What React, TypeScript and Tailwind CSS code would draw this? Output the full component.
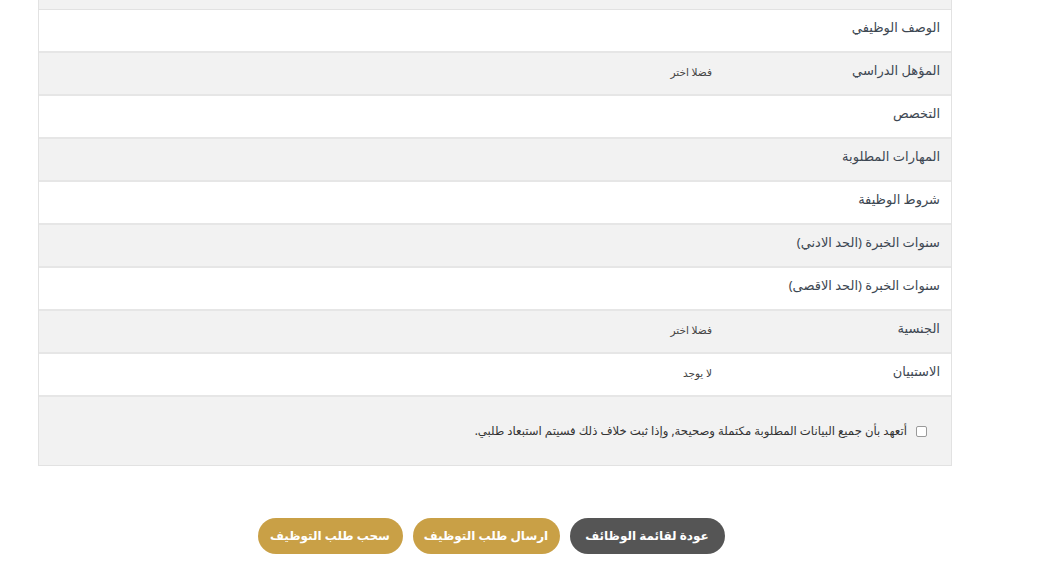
import React from "react";

const rows: { label: string; value?: string; gray: boolean }[] = [
  { label: "الوصف الوظيفي", gray: false },
  { label: "المؤهل الدراسي", value: "فضلا اختر", gray: true },
  { label: "التخصص", gray: false },
  { label: "المهارات المطلوبة", gray: true },
  { label: "شروط الوظيفة", gray: false },
  { label: "سنوات الخبرة (الحد الادني)", gray: true },
  { label: "سنوات الخبرة (الحد الاقصى)", gray: false },
  { label: "الجنسية", value: "فضلا اختر", gray: true },
  { label: "الاستبيان", value: "لا يوجد", gray: false },
];

export default function App() {
  return (
    <div
      dir="rtl"
      className="w-[1043px] h-[574px] bg-white overflow-hidden"
      style={{ fontFamily: '"Noto Sans", "DejaVu Sans", sans-serif' }}
    >
      <div className="ml-[38px] mr-[91px] w-[914px]" dir="rtl">
        <div className="border-l border-r border-[#e2e2e2]">
          <div className="h-[10px] bg-[#f2f2f2] border-b border-[#e2e2e2]" />
          {rows.map((r, i) => (
            <div
              key={i}
              className={`flex h-[43px] border-b-2 border-[#e6e6e6] ${r.gray ? "bg-[#f2f2f2]" : "bg-white"}`}
            >
              <div className="w-[228px] shrink-0 pr-[11px] pt-[8px] text-[13px] text-[#3d4752]">
                {r.label}
              </div>
              <div className="flex-1 pr-[11px] pt-[12px] text-[10.5px] text-[#444]">
                {r.value ?? ""}
              </div>
            </div>
          ))}
          <div className="h-[69px] bg-[#f2f2f2] border-b border-[#e2e2e2] flex items-center pr-[24px] gap-[9px]">
            <span className="w-[11px] h-[11px] border border-[#9a9a9a] rounded-[2px] bg-white shrink-0" />
            <span className="text-[11.7px] text-[#333]">
              أتعهد بأن جميع البيانات المطلوبة مكتملة وصحيحة, وإذا ثبت خلاف ذلك فسيتم استبعاد طلبي.
            </span>
          </div>
        </div>
        <div className="flex justify-center gap-[10px] mt-[52px] pr-[8px]">
          <button className="h-[36px] w-[155px] rounded-full bg-[#555555] text-white text-[12px] font-bold">
            عودة لقائمة الوظائف
          </button>
          <button className="h-[36px] w-[147px] rounded-full bg-[#c9a046] text-white text-[12px] font-bold">
            ارسال طلب التوظيف
          </button>
          <button className="h-[36px] w-[145px] rounded-full bg-[#c9a046] text-white text-[12px] font-bold">
            سحب طلب التوظيف
          </button>
        </div>
      </div>
    </div>
  );
}
